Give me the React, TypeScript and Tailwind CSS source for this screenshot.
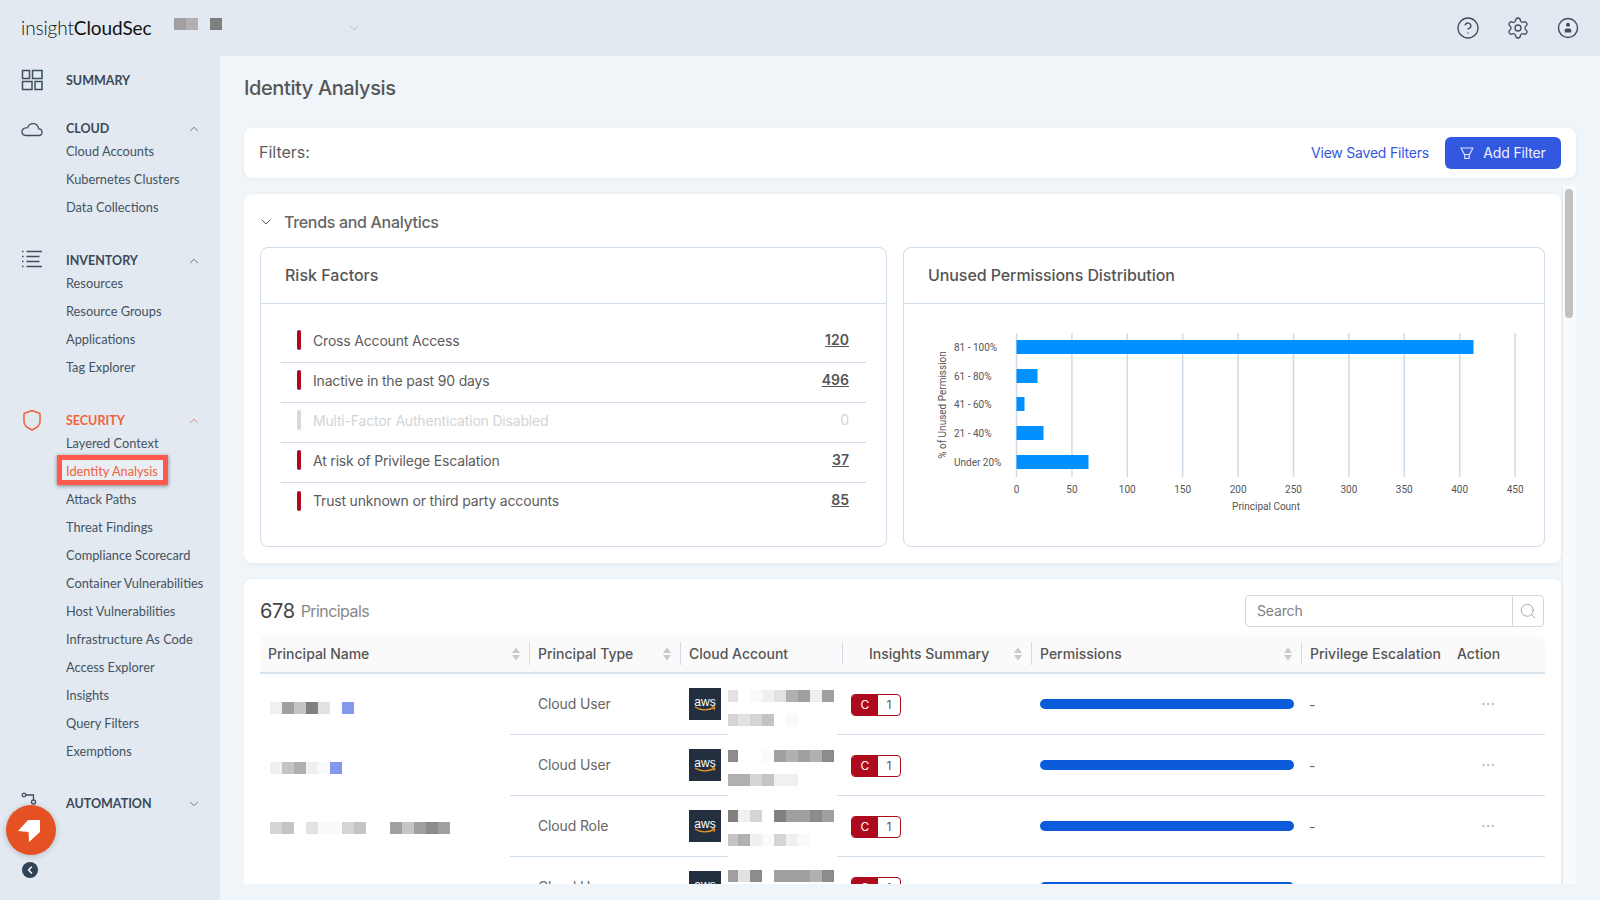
import React from "react";
import { ChevronDown, ChevronUp, ChevronLeft, CircleHelp, Settings, Search, MoreHorizontal } from "lucide-react";

const sans = "font-['Inter','Liberation_Sans',sans-serif]";
const nav = "font-['Lato','Open_Sans',sans-serif]";

// blurred-out cells from the screenshot, one key per shade
const shades: Record<string, string> = {
  w: "bg-transparent",
  "1": "bg-[#fafafa]",
  "2": "bg-[#f0f0f0]",
  "3": "bg-[#e2e2e2]",
  "4": "bg-[#d4d4d4]",
  "5": "bg-[#c4c4c4]",
  "6": "bg-[#b0b0b0]",
  "7": "bg-[#a0a0a0]",
  "8": "bg-[#8c8c8c]",
  "9": "bg-[#808080]",
  b: "bg-[#8298ea]",
};

const Pixels: React.FC<{ cells: string; narrowFirst?: boolean }> = ({ cells, narrowFirst }) => (
  <div className="flex h-3">
    {cells.split(" ").map((c, i) => (
      <div key={i} className={`h-3 ${narrowFirst && i === 0 ? "w-[10px]" : "w-3"} ${shades[c]}`} />
    ))}
  </div>
);

const SummaryIcon = () => (
  <svg width="22" height="22" viewBox="0 0 22 22" fill="none" stroke="#3d4f5e" strokeWidth="1.5">
    <rect x="1.5" y="1.5" width="7" height="8" />
    <rect x="11.5" y="1.5" width="9.5" height="8" />
    <rect x="1.5" y="12.5" width="9.5" height="8" />
    <rect x="14" y="12.5" width="7" height="8" />
  </svg>
);
const CloudIcon = () => (
  <svg width="22" height="22" viewBox="0 0 22 22" fill="none" stroke="#3d4f5e" strokeWidth="1.3">
    <path d="M5 18.500h12.500c2.200 0 3.500-1.500 3.500-3.300 0-1.900-1.500-3.300-3.300-3.300-.5-3.200-2.800-5.200-5.700-5.200-2.600 0-4.500 1.600-5.300 3.900C3.500 10.700 1 12.300 1 14.800c0 2.100 1.700 3.700 4 3.700z" />
  </svg>
);
const ListIcon = () => (
  <svg width="22" height="22" viewBox="0 0 22 22" fill="none" stroke="#3d4f5e" strokeWidth="1.3">
    <path d="M5.500 2.500H21M5.500 7.500H18.500M5.500 12.500H18.500M5.500 17.500H21" />
    <path d="M1 2.500h2M1 7.500h2M1 12.500h2M1 17.500h2" strokeDasharray="1.500 0.500" />
  </svg>
);
const ShieldIcon = () => (
  <svg width="22" height="22" viewBox="0 0 22 22" fill="none" stroke="#f0623a" strokeWidth="1.500">
    <path d="M3 4.500 11 1.500l8 3v8.500c0 3-3.500 6-8 8-4.500-2-8-5-8-8z" strokeLinejoin="round" />
  </svg>
);
const FlowIcon = () => (
  <svg width="22" height="22" viewBox="0 0 22 22" fill="none" stroke="#3d4f5e" strokeWidth="1.300">
    <circle cx="3" cy="3" r="1.800" />
    <path d="M5 3h7.500v5" />
    <circle cx="12.500" cy="10" r="2" />
  </svg>
);

const FunnelIcon = () => (
  <svg width="14" height="14" viewBox="0 0 14 14" fill="none" stroke="#dfe6fb" strokeWidth="1.200">
    <path d="M1 2h12L9.500 8.500h-5z" strokeLinejoin="round" />
    <path d="M4.800 9v3.500h4.400V9" />
  </svg>
);

const UserCircle = () => (
  <svg width="24" height="24" viewBox="0 0 24 24" fill="none">
    <circle cx="12" cy="12" r="9.500" stroke="#3d4f5e" strokeWidth="1.400" />
    <circle cx="12" cy="8.800" r="2" fill="#3d4f5e" />
    <path d="M8.800 16.500v-2.200c0-1 .8-1.800 1.800-1.800h2.800c1 0 1.800.8 1.800 1.800v2.200z" fill="#3d4f5e" />
  </svg>
);

const SortIcon = () => (
  <svg width="10" height="14" viewBox="0 0 10 14" className="shrink-0">
    <path d="M5 0.500 9 6H1z" fill="#c9c9c9" />
    <path d="M5 13.500 1 8h8z" fill="#c9c9c9" />
  </svg>
);

const AwsLogo = () => (
  <div className="relative flex h-8 w-8 shrink-0 flex-col items-center bg-[#232f3e]">
    <span className="mt-[6px] font-['Liberation_Sans',sans-serif] text-[12px] leading-[16px] text-white">aws</span>
    <svg width="22" height="6" viewBox="0 0 22 6" className="-mt-[4px]" fill="none" stroke="#f0982a" strokeWidth="1.300">
      <path d="M1 1c5.500 3.500 13 3.800 19 .6" />
      <path d="M17.800 0.500 21 1l-1 3" strokeWidth="1" />
    </svg>
  </div>
);

interface NavSection {
  label: string;
  icon: React.ReactNode;
  items: string[];
  margin: string;
  active?: boolean;
  chevron?: "up" | "down";
}

const sections: NavSection[] = [
  { label: "SUMMARY", icon: <SummaryIcon />, items: [], margin: "mt-[13px]" },
  { label: "CLOUD", icon: <CloudIcon />, items: ["Cloud Accounts", "Kubernetes Clusters", "Data Collections"], margin: "mt-6", chevron: "up" },
  { label: "INVENTORY", icon: <ListIcon />, items: ["Resources", "Resource Groups", "Applications", "Tag Explorer"], margin: "mt-[27px]", chevron: "up" },
  {
    label: "SECURITY",
    icon: <ShieldIcon />,
    active: true,
    margin: "mt-[27px]",
    chevron: "up",
    items: [
      "Layered Context",
      "Identity Analysis",
      "Attack Paths",
      "Threat Findings",
      "Compliance Scorecard",
      "Container Vulnerabilities",
      "Host Vulnerabilities",
      "Infrastructure As Code",
      "Access Explorer",
      "Insights",
      "Query Filters",
      "Exemptions",
    ],
  },
  { label: "AUTOMATION", icon: <FlowIcon />, items: [], margin: "mt-[26px]", chevron: "down" },
];

const Sidebar = () => (
  <aside className={`relative w-[220px] shrink-0 bg-[#e2e9f1] ${nav}`}>
    {sections.map((s) => (
      <div key={s.label} className={s.margin}>
        <div className="flex h-6 items-center pl-[21px] pr-[19px]">
          <div className="-mt-[2px] w-[22px] shrink-0">{s.icon}</div>
          <span className={`ml-[23px] text-[12.500px] font-bold ${s.active ? "text-[#f0623a]" : "text-[#3a4a58]"}`}>{s.label}</span>
          {s.chevron === "up" && <ChevronUp size={14} strokeWidth={1.2} className={`ml-auto ${s.active ? "text-[#f0623a]" : "text-[#3a4a58]"}`} />}
          {s.chevron === "down" && <ChevronDown size={14} strokeWidth={1.2} className="ml-auto text-[#3a4a58]" />}
        </div>
        {s.items.length > 0 && (
          <div className="-mt-[3px]">
            {s.items.map((item) => (
              <div key={item} className="relative flex h-7 items-center pb-px pl-[66px] text-[12.800px]">
                {item === "Identity Analysis" && (
                  <div className="absolute left-[57px] top-[-3px] h-[30px] w-[111px] border-[5px] border-[#ff5a4d] bg-[#e9eef4] shadow-[0_1px_4px_rgba(0,0,0,0.45)]" />
                )}
                <span className={item === "Identity Analysis" ? "relative text-[#f0623a]" : "text-[#45535f]"}>{item}</span>
              </div>
            ))}
          </div>
        )}
      </div>
    ))}
    {/* floating helper button and collapse toggle */}
    <div className="absolute left-[6px] top-[749px] flex h-[50px] w-[50px] items-center justify-center rounded-full bg-[#e55122] shadow-[0_1px_6px_rgba(0,0,0,0.2)]">
      <svg width="24" height="24" viewBox="0 0 24 24" className="overflow-visible">
        <path d="M9 2H21V14L10 24 9.500 14-1 13z" fill="#fff" />
      </svg>
    </div>
    <div className="absolute left-[22px] top-[806px] flex h-4 w-4 items-center justify-center rounded-full bg-[#2f4456]">
      <ChevronLeft size={12} strokeWidth={3} className="text-white" />
    </div>
  </aside>
);

const Topbar = () => (
  <header className="flex h-14 shrink-0 items-center bg-[#e2e9f1] pl-[21px] pr-[20px]">
    <span className={`w-[153px] text-[19px] font-light tracking-[-0.1px] text-[#111] ${nav}`}>
      insight<span className="font-normal">CloudSec</span>
    </span>
    <div className="-mt-2 flex">
      <Pixels cells="7 6" />
      <div className="ml-3">
        <Pixels cells="9" />
      </div>
    </div>
    <ChevronDown size={16} strokeWidth={1.2} className="ml-[124px] text-[#b4c0cc]" />
    <div className="ml-auto flex items-center gap-[26px] text-[#3d4f5e]">
      <CircleHelp size={24} strokeWidth={1.300} />
      <Settings size={24} strokeWidth={1.300} />
      <UserCircle />
    </div>
  </header>
);

const riskFactors = [
  { label: "Cross Account Access", value: "120" },
  { label: "Inactive in the past 90 days", value: "496" },
  { label: "Multi-Factor Authentication Disabled", value: "0", disabled: true },
  { label: "At risk of Privilege Escalation", value: "37" },
  { label: "Trust unknown or third party accounts", value: "85" },
];

const RiskFactors = () => (
  <div className="w-[627px] shrink-0 rounded-lg border border-[#cfdcea]">
    <div className="flex h-[56px] items-center border-b border-[#cfdcea] pb-[2px] pl-6 text-[16px] font-medium text-[#555]">Risk Factors</div>
    <div className="px-5 pt-[19px]">
      {riskFactors.map((r, i) => (
        <div key={r.label} className={`flex h-10 items-center pb-[5px] pl-4 pr-[17px] ${i < riskFactors.length - 1 ? "border-b border-[#cfdcea]" : ""}`}>
          <div className={`h-5 w-1 rounded-sm ${r.disabled ? "bg-[#d8d8d8]" : "bg-[#ad0a1e]"}`} />
          <span className={`ml-3 text-[14px] tracking-[-0.013em] ${r.disabled ? "text-[#d4d4d4]" : "text-[#5c5c5c]"}`}>{r.label}</span>
          <span className={`ml-auto pb-[2px] text-[14px] ${r.disabled ? "text-[#d4d4d4]" : "font-semibold text-[#555] underline"}`}>{r.value}</span>
        </div>
      ))}
    </div>
  </div>
);

const ticks = [0, 50, 100, 150, 200, 250, 300, 350, 400, 450];
const bars = [
  { label: "81 - 100%", width: 457 },
  { label: "61 - 80%", width: 21 },
  { label: "41 - 60%", width: 8 },
  { label: "21 - 40%", width: 27 },
  { label: "Under 20%", width: 72 },
];
const barY = [36, 65, 93, 122, 151];

const PermissionsChart = () => (
  <svg width="640" height="240" viewBox="0 0 640 240" fontFamily="Roboto, sans-serif" fill="#555">
    {ticks.map((t, i) => {
      const x = 112.5 + i * 55.4;
      return (
        <g key={t}>
          <line x1={x} x2={x} y1="29" y2="173" stroke="#cddbe8" strokeWidth="1.500" />
          <text x={x} y="189" fontSize="10" textAnchor="middle">{t}</text>
        </g>
      );
    })}
    {bars.map((b, i) => (
      <g key={b.label}>
        <rect x="112.5" y={barY[i]} width={b.width} height="14" fill="#0090ff" />
        <text x="50" y={barY[i] + 10.500} fontSize="10">{b.label}</text>
      </g>
    ))}
    <text x="362" y="206" fontSize="10" textAnchor="middle">Principal Count</text>
    <text transform="translate(41.500 101) rotate(-90)" fontSize="10" textAnchor="middle">% of Unused Permission</text>
  </svg>
);

const columns = "grid grid-cols-[270px_151px_162px_189px_270px_147px_1fr]";

const HeaderCell: React.FC<{ label: string; sort?: boolean; divider?: boolean; pad?: string }> = ({ label, sort, divider, pad = "pl-2" }) => (
  <div className={`flex h-[23px] items-center pr-2 ${pad} ${divider ? "border-r border-[#cfdcea]" : ""}`}>
    <span className="whitespace-nowrap text-[14px] font-medium text-[#555]">{label}</span>
    {sort && (
      <span className="ml-auto">
        <SortIcon />
      </span>
    )}
  </div>
);

const rows = [
  { name: "2 7 5 9 3 w b", type: "Cloud User", top: "3 w 1 2 3 6 7 2 7", bottom: "4 3 4 5 w 1", offset: "mt-2" },
  { name: "2 5 6 2 1 b", type: "Cloud User", top: "8 w w 1 7 6 7 6 8", bottom: "6 6 4 5 2 2", offset: "mt-[6px]" },
  { name: "4 5 w 3 1 1 4 5 w w 7 5 7 8 7", type: "Cloud Role", top: "9 2 4 w 9 7 7 8 7", bottom: "5 6 2 1 4 2 1", offset: "mt-1" },
  { name: "", type: "Cloud User", top: "7 3 8 w 7 7 7 6 8", bottom: "", offset: "mt-[2px]" },
];

const TableRow: React.FC<{ row: (typeof rows)[number] }> = ({ row }) => (
  <div>
    <div className={`${columns} h-[60px] items-center text-[14px] text-[#666]`}>
      <div className={`${row.offset} pl-[10px]`}>
        <Pixels cells={row.name || "w"} />
      </div>
      <div className="pb-px pl-2 tracking-[-0.01em]">{row.type}</div>
      <div className="flex items-center pl-2">
        <AwsLogo />
        <div className={`${row.offset} ml-[7px] flex flex-col gap-3`}>
          <Pixels cells={row.top} narrowFirst />
          <Pixels cells={row.bottom || "w"} narrowFirst />
        </div>
      </div>
      <div className="pl-2">
        <div className="mt-[2px] flex h-[22px] w-[50px] overflow-hidden rounded border border-[#ad0a1e] text-[12px]">
          <div className="flex w-[26px] items-center justify-center bg-[#ad0a1e] text-white">C</div>
          <div className="flex flex-1 items-center justify-center text-[#555]">1</div>
        </div>
      </div>
      <div className="pl-2">
        <div className="h-[10px] w-[254px] rounded-full bg-[#0b5bdb]" />
      </div>
      <div className="pl-[7px]">-</div>
      <div className="flex justify-start pl-[31px] text-[#9a9a9a]">
        <MoreHorizontal size={16} strokeWidth={1} />
      </div>
    </div>
    {/* the row rule is hidden behind the blurred blocks */}
    <div className="flex h-px">
      <div className="w-[250px]" />
      <div className="w-[218px] bg-[#cfdcea]" />
      <div className="w-[109px]" />
      <div className="flex-1 bg-[#cfdcea]" />
    </div>
  </div>
);

export default function App() {
  return (
    <div className={`flex h-[900px] w-[1600px] flex-col overflow-hidden bg-[#f0f5fa] ${sans}`}>
      <Topbar />
      <div className="flex min-h-0 flex-1">
        <Sidebar />
        <main className="flex min-w-0 flex-1 flex-col px-6 pb-4">
          <h1 className="flex h-[72px] shrink-0 items-center pb-2 text-[20px] font-medium tracking-[-0.02em] text-[#555]">Identity Analysis</h1>

          <div className="flex h-[50px] shrink-0 items-center rounded-lg bg-white pl-[15px] pr-[15px] shadow-[0_1px_4px_rgba(0,0,0,0.06)]">
            <span className="pb-[2px] text-[16px] text-[#5c5c5c]">Filters:</span>
            <a className="ml-auto pb-[2px] text-[14px] tracking-[-0.015em] text-[#3358e0]">View Saved Filters</a>
            <button className="ml-4 flex h-8 w-[116px] items-center justify-center gap-[9px] rounded-md bg-[#3358e0] pb-px text-[14px] tracking-[-0.01em] text-[#eef2ff]">
              <FunnelIcon />
              Add Filter
            </button>
          </div>

          <div className="mt-2 flex min-h-0 flex-1 overflow-hidden">
            <div className="w-[1317px] shrink-0 pt-2">
              <section className="rounded-lg bg-white px-4 pb-4 shadow-[0_1px_4px_rgba(0,0,0,0.06)]">
                <div className="flex h-[53px] items-center pt-[2px]">
                  <ChevronDown size={16} strokeWidth={1.500} className="-ml-[2px] text-[#555]" />
                  <span className="ml-[10px] text-[16px] font-medium tracking-[-0.02em] text-[#666]">Trends and Analytics</span>
                </div>
                <div className="flex h-[300px] gap-4">
                  <RiskFactors />
                  <div className="flex-1 rounded-lg border border-[#cfdcea]">
                    <div className="flex h-[56px] items-center border-b border-[#cfdcea] pb-[2px] pl-6 text-[16px] font-medium tracking-[-0.005em] text-[#555]">
                      Unused Permissions Distribution
                    </div>
                    <PermissionsChart />
                  </div>
                </div>
              </section>

              <section className="mt-4 rounded-lg bg-white px-4 pt-4 shadow-[0_1px_4px_rgba(0,0,0,0.06)]">
                <div className="flex h-8 items-center">
                  <span className="text-[20px] tracking-[-0.02em] text-[#444]">678</span>
                  <span className="ml-[6px] text-[16px] tracking-[-0.035em] text-[#888]">Principals</span>
                  <div className="ml-auto mr-px flex h-8 w-[299px] rounded border border-[#d8d8d8]">
                    <div className="flex flex-1 items-center pb-[2px] pl-[11px] text-[14px] tracking-[-0.01em] text-[#808080]">Search</div>
                    <div className="flex w-[31px] items-center justify-center border-l border-[#d8d8d8] text-[#999]">
                      <Search size={18} strokeWidth={1.100} />
                    </div>
                  </div>
                </div>
                <div className={`${columns} mt-2 h-[39px] items-center rounded-t-lg border-b-2 border-[#dbe5ee] bg-[#fafafa]`}>
                  <HeaderCell label="Principal Name" sort divider />
                  <HeaderCell label="Principal Type" sort divider />
                  <HeaderCell label="Cloud Account" divider />
                  <HeaderCell label="Insights Summary" sort divider pad="pl-[26px]" />
                  <HeaderCell label="Permissions" sort divider />
                  <HeaderCell label="Privilege Escalation" />
                  <HeaderCell label="Action" />
                </div>
                {rows.map((row, i) => (
                  <TableRow key={i} row={row} />
                ))}
              </section>
            </div>
            {/* scrollbar */}
            <div className="ml-px flex-1 border-l border-[#e8ecef] bg-[#f8fafb] pl-[2px] pt-[3px]">
              <div className="h-[129px] w-2 rounded-sm bg-[#c1c1c1]" />
            </div>
          </div>
        </main>
      </div>
    </div>
  );
}
